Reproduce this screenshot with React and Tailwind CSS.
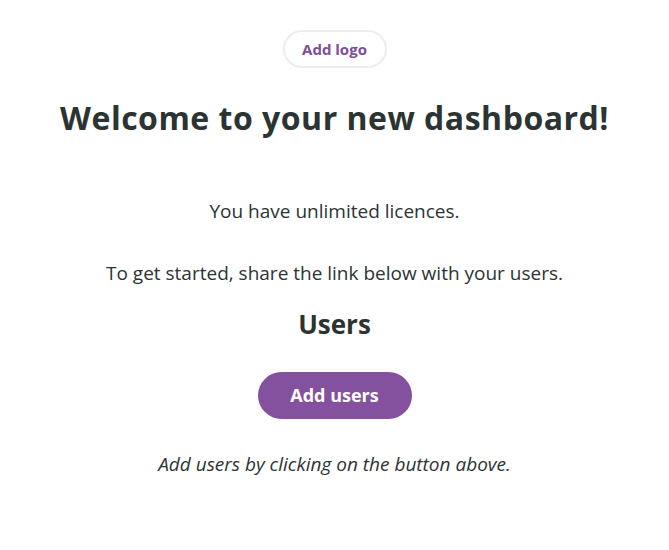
import React from 'react';

const App = () => {
  return (
    <div className="min-h-[550px] bg-white text-[#2c3433] font-['Open_Sans',sans-serif] flex flex-col items-center">
      <button className="mt-[30px] h-[38px] w-[104px] rounded-full border-2 border-[#f1eaf3] text-[#7d4f98] text-[15px] font-bold">
        Add logo
      </button>

      <h1 className="mt-[30px] text-[32px] leading-[40px] font-bold tracking-[0.5px]">
        Welcome to your new dashboard!
      </h1>

      <p className="mt-[59px] text-[19px] leading-[28px]">You have unlimited licences.</p>
      <p className="mt-[34px] text-[19px] leading-[28px]">To get started, share the link below with your users.</p>

      <h2 className="mt-[21px] text-[26px] leading-[32px] font-bold">Users</h2>

      <button className="mt-[32px] h-[47px] w-[154px] rounded-full bg-[#84519e] text-white text-[18px] font-bold">
        Add users
      </button>

      <p className="mt-[31px] text-[19px] leading-[28px] italic">Add users by clicking on the button above.</p>
    </div>
  );
};

export default App;
